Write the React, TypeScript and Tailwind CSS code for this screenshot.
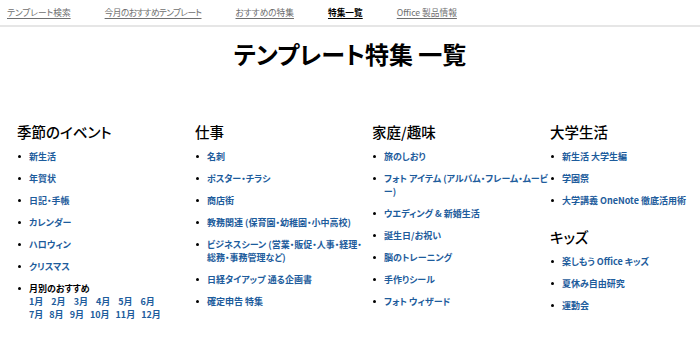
type Item = { label: string };

const nav = [
  { label: 'テンプレート検索', current: false, tight: false },
  { label: '今月のおすすめテンプレート', current: false, tight: true },
  { label: 'おすすめの特集', current: false, tight: false },
  { label: '特集一覧', current: true, tight: false },
  { label: 'Office 製品情報', current: false, tight: false },
];

const seasons: Item[] = [
  { label: '新生活' },
  { label: '年賀状' },
  { label: '日記・手帳' },
  { label: 'カレンダー' },
  { label: 'ハロウィン' },
  { label: 'クリスマス' },
];

// each entry is a list of lines, broken as on the original page
const work = [
  ['名刺'],
  ['ポスター・チラシ'],
  ['商店街'],
  ['教務関連 (保育園・幼稚園・小中高校)'],
  ['ビジネスシーン (営業・販促・人事・経理・', '総務・事務管理など)'],
  ['日経タイアップ 通る企画書'],
  ['確定申告 特集'],
];

const home = [
  ['旅のしおり'],
  ['フォト アイテム (アルバム・フレーム・ムービ', 'ー)'],
  ['ウエディング & 新婚生活'],
  ['誕生日/お祝い'],
  ['脳のトレーニング'],
  ['手作りシール'],
  ['フォト ウィザード'],
];

const college = [['新生活 大学生編'], ['学園祭'], ['大学講義 OneNote 徹底活用術']];
const kids = [['楽しもう Office キッズ'], ['夏休み自由研究'], ['運動会']];

function Bullet({ children }: { children: React.ReactNode }) {
  return (
    <li className="flex mb-[9px]">
      <span className="w-[12px] shrink-0 flex pt-[5px]">
        <span className="ml-[1px] w-[3px] h-[3px] rounded-full bg-black" />
      </span>
      <div className="leading-[13px] min-w-0">{children}</div>
    </li>
  );
}

function LinkList({ items }: { items: string[][] }) {
  return (
    <ul className="mt-[8px]">
      {items.map((lines) => (
        <Bullet key={lines.join('')}>
          <a className="text-[#1d5c9c] font-semibold">
            {lines.map((l) => (
              <span key={l} className="block whitespace-nowrap">
                {l}
              </span>
            ))}
          </a>
        </Bullet>
      ))}
    </ul>
  );
}

function Heading({ children, className = '' }: { children: React.ReactNode; className?: string }) {
  return <h2 className={`text-[14.5px] leading-[20px] text-black font-medium ${className}`}>{children}</h2>;
}

export default function App() {
  return (
    <div className="w-[700px] h-[339px] bg-white overflow-hidden font-['Noto_Sans_CJK_JP',sans-serif] [font-feature-settings:'palt']">
      <nav className="h-[27px] border-b-2 border-[#e6e6e6] flex items-center gap-[34px] pl-[7px] text-[8.7px]">
        {nav.map((n) => (
          <a
            key={n.label}
            className={
              (n.current ? 'text-black font-bold' : 'text-[#6e6e6e]') +
              ' underline underline-offset-2' +
              (n.tight ? ' tracking-[-0.6px]' : '')
            }
          >
            {n.label}
          </a>
        ))}
      </nav>

      <h1 className="mt-[12px] text-center text-[24px] leading-[30px] font-bold text-black">テンプレート特集 一覧</h1>

      <div className="mt-[53px] pl-[17px] grid grid-cols-[178px_177px_178px_1fr] text-[9px]">
        <section>
          <Heading>季節のイベント</Heading>
          <ul className="mt-[8px]">
            {seasons.map((s) => (
              <Bullet key={s.label}>
                <a className="text-[#1d5c9c] font-semibold">{s.label}</a>
              </Bullet>
            ))}
            <Bullet>
              <div className="font-bold text-black">月別のおすすめ</div>
              <div className="flex gap-[8px] text-[#1d5c9c] font-semibold">
                {['1月', '2月', '3月', '4月', '5月', '6月'].map((m) => (
                  <a key={m}>{m}</a>
                ))}
              </div>
              <div className="flex gap-[6px] text-[#1d5c9c] font-semibold">
                {['7月', '8月', '9月', '10月', '11月', '12月'].map((m) => (
                  <a key={m}>{m}</a>
                ))}
              </div>
            </Bullet>
          </ul>
        </section>

        <section>
          <Heading>仕事</Heading>
          <LinkList items={work} />
        </section>

        <section>
          <Heading>家庭/趣味</Heading>
          <LinkList items={home} />
        </section>

        <section>
          <Heading>大学生活</Heading>
          <LinkList items={college} />
          <Heading className="mt-[20px]">キッズ</Heading>
          <div className="mt-[2px]">
            <LinkList items={kids} />
          </div>
        </section>
      </div>
    </div>
  );
}
